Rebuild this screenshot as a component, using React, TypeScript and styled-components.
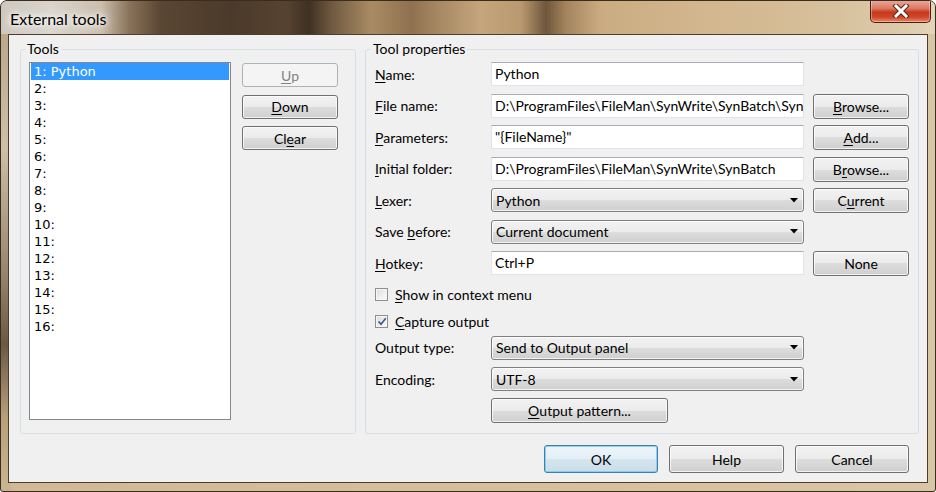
import React from "react";
import styled, { createGlobalStyle } from "styled-components";

const FONT = `"Lato", "Liberation Sans", Arial, sans-serif`;
const LIST_FONT = `"DejaVu Sans", Verdana, sans-serif`;

const GlobalStyle = createGlobalStyle`
  html, body { margin: 0; padding: 0; }
  body {
    width: 936px; height: 492px; overflow: hidden; background: #fff;
    font-family: ${FONT}; font-size: 14px; color: #000;
  }
  * { box-sizing: border-box; }
`;

const Window = styled.div`
  width: 936px;
  height: 492px;
  border: 1px solid #3a2c1f;
  border-radius: 7px 7px 3px 3px;
  overflow: hidden;
  display: flex;
  flex-direction: column;
  background:
    linear-gradient(90deg, transparent 0, transparent 10px, #d0b994 10px, #d9c6a4 100%),
    linear-gradient(180deg, #b6a285 0%, #cdbfa8 30%, #9a8670 55%, #6c5843 70%, #b79f7c 85%, #cbb591 100%);
`;

const TitleBar = styled.div`
  flex: none;
  height: 33px;
  display: flex;
  align-items: flex-start;
  justify-content: space-between;
  padding: 0 4px 0 9px;
  background: linear-gradient(
    90deg,
    #cdc8bf 0px,
    #dad5cd 50px,
    #cbbfae 100px,
    #8a735a 128px,
    #5a4633 160px,
    #4b3a2a 230px,
    #574330 285px,
    #3f3022 308px,
    #6e5840 330px,
    #a98b63 370px,
    #8f7150 410px,
    #a88a64 440px,
    #c5a57b 480px,
    #b9996f 520px,
    #6f563b 545px,
    #a3845c 565px,
    #cbac82 600px,
    #d2b68d 700px,
    #d6bf9a 820px,
    #ddcaa9 900px,
    #e4d5ba 934px
  );
`;

const Title = styled.span`
  margin-top: 8px;
  font-size: 16px;
  line-height: 20px;
  color: #000;
  text-shadow: 0 0 5px #fff, 0 0 9px #fff, 0 0 14px rgba(255, 255, 255, 0.9);
`;

const CloseButton = styled.div`
  width: 61px;
  height: 23px;
  margin-top: -1px;
  border: 1px solid #4a1d14;
  border-top: none;
  border-radius: 0 0 5px 5px;
  background: linear-gradient(180deg, #e9ab9b 0%, #dc7a63 38%, #c53a1d 55%, #d14629 78%, #e98a6d 100%);
  box-shadow: inset 0 0 0 1px rgba(255, 255, 255, 0.35);
  display: flex;
  align-items: center;
  justify-content: center;
`;

const Body = styled.div`
  flex: 1;
  display: flex;
  padding: 0 7px 8px;
`;

const Client = styled.div`
  flex: 1;
  border: 1px solid #4d3d2d;
  background: #f0f0f0;
  display: flex;
  flex-direction: column;
  gap: 11px;
  padding: 5px 8px 9px 11px;
`;

const GroupsRow = styled.div`
  flex: none;
  height: 394px;
  display: flex;
  gap: 9px;
`;

const Group = styled.fieldset<{ $w: number; $pad: string }>`
  width: ${(p) => p.$w}px;
  height: 394px;
  margin: 0;
  min-width: 0;
  border: 1px solid #d5dfe5;
  border-radius: 3px;
  padding: ${(p) => p.$pad};
`;

const Legend = styled.legend`
  font-size: 14px;
  line-height: 18px;
  padding: 0 2px;
  margin-left: -4px;
`;

const ToolsBody = styled.div`
  display: flex;
  gap: 11px;
  align-items: flex-start;
`;

const ListBox = styled.div`
  width: 202px;
  height: 358px;
  border: 1px solid #828790;
  background: #fff;
  padding: 0 1px;
  font-family: ${LIST_FONT};
  font-size: 13px;
`;

const ListItem = styled.div<{ $selected?: boolean }>`
  height: 17px;
  line-height: 18px;
  padding-left: 3px;
  background: ${(p) => (p.$selected ? "#3399ff" : "transparent")};
  color: ${(p) => (p.$selected ? "#fff" : "#000")};
  white-space: nowrap;
`;

const ButtonColumn = styled.div`
  display: flex;
  flex-direction: column;
  gap: 7.5px;
  margin-top: 1px;
`;

const Button = styled.button<{ $w: number; $h?: number; $primary?: boolean }>`
  width: ${(p) => p.$w}px;
  height: ${(p) => p.$h ?? 25}px;
  padding: 0;
  margin: 0;
  font-family: ${FONT};
  font-size: 14px;
  color: #000;
  border: 1px solid ${(p) => (p.$primary ? "#3c7fb1" : "#707070")};
  border-radius: 3px;
  background: ${(p) =>
    p.$primary
      ? "linear-gradient(180deg, #eef5fa 0%, #e3eef5 50%, #d4e5ef 50%, #c9dde9 100%)"
      : "linear-gradient(180deg, #f2f2f2 0%, #ebebeb 50%, #dddddd 50%, #cfcfcf 100%)"};
  box-shadow: inset 0 0 0 1px ${(p) => (p.$primary ? "rgba(120,200,240,0.8)" : "rgba(255,255,255,0.75)")};
  display: flex;
  align-items: center;
  justify-content: center;
  align-self: start;

  &:disabled {
    border-color: #adb2b5;
    background: #f4f4f4;
    color: #838383;
    box-shadow: none;
  }
`;

const PropGrid = styled.div`
  display: grid;
  grid-template-columns: 107px 313px 96px;
  grid-template-rows: repeat(8, 24px) 14px 24px 24px 24px;
  column-gap: 9px;
  row-gap: 7.5px;
  align-items: center;
`;

const FieldLabel = styled.span`
  font-size: 14px;
  white-space: nowrap;
`;

const Key = styled.span`
  text-decoration: underline;
  text-underline-offset: 2px;
  text-decoration-thickness: 1px;
`;

const TextBox = styled.div`
  height: 24px;
  background: #fff;
  border: 1px solid #e2e3ea;
  border-top-color: #abadb3;
  padding: 0 3px;
  line-height: 22px;
  white-space: nowrap;
  overflow: hidden;
`;

const Select = styled.div`
  height: 24px;
  border: 1px solid #7f7f7f;
  border-radius: 3px;
  background: linear-gradient(180deg, #f2f2f2 0%, #ebebeb 50%, #dddddd 50%, #cfcfcf 100%);
  box-shadow: inset 0 0 0 1px rgba(255, 255, 255, 0.75);
  display: flex;
  align-items: center;
  justify-content: space-between;
  padding: 0 5px 0 4px;
  white-space: nowrap;
`;

const CheckRow = styled.div`
  grid-column: 1 / -1;
  display: flex;
  align-items: center;
  gap: 7px;
`;

const CheckBox = styled.span`
  flex: none;
  width: 13px;
  height: 13px;
  border: 1px solid #8e8f8f;
  background: linear-gradient(135deg, #d9dadb 0%, #f0f0f0 60%, #fbfbfb 100%);
  box-shadow: inset 0 0 0 1px #f6f6f6;
  display: flex;
  align-items: center;
  justify-content: center;
`;

const PatternCell = styled.div`
  grid-column: 2;
  display: flex;
`;

const BottomRow = styled.div`
  flex: none;
  height: 28px;
  display: flex;
  justify-content: flex-end;
  gap: 11px;
  padding-right: 10px;
`;

const Arrow = () => (
  <svg width="8" height="5" viewBox="0 0 8 5">
    <path d="M0 0 H8 L4 4.5 Z" fill="#000" />
  </svg>
);

const Tick = () => (
  <svg width="10" height="9" viewBox="0 0 10 9">
    <path d="M1.5 4.5 L4 7.2 L8.8 1.2" fill="none" stroke="#3b5b8f" strokeWidth="1.7" />
  </svg>
);

const CloseGlyph = () => (
  <svg width="18" height="14" viewBox="0 0 18 14">
    <path d="M4 2 L14 12 M14 2 L4 12" stroke="#5a2418" strokeWidth="5" strokeLinecap="square" />
    <path d="M4 2 L14 12 M14 2 L4 12" stroke="#fff" strokeWidth="3" strokeLinecap="square" />
  </svg>
);

const items = Array.from({ length: 16 }, (_, i) => (i === 0 ? "1: Python" : `${i + 1}:`));

export default function App() {
  return (
    <>
      <GlobalStyle />
      <Window>
        <TitleBar>
          <Title>External tools</Title>
          <CloseButton>
            <CloseGlyph />
          </CloseButton>
        </TitleBar>
        <Body>
          <Client>
            <GroupsRow>
              <Group $w={336} $pad="4px 17px 13px 8px">
                <Legend>Tools</Legend>
                <ToolsBody>
                  <ListBox>
                    {items.map((t, i) => (
                      <ListItem key={t} $selected={i === 0}>
                        {t}
                      </ListItem>
                    ))}
                  </ListBox>
                  <ButtonColumn>
                    <Button $w={96} $h={24} disabled>
                      <Key>U</Key>p
                    </Button>
                    <Button $w={96} $h={24}>
                      <Key>D</Key>own
                    </Button>
                    <Button $w={96} $h={24}>
                      Cl<Key>e</Key>ar
                    </Button>
                  </ButtonColumn>
                </ToolsBody>
              </Group>
              <Group $w={554} $pad="4px 8px 10px 9px">
                <Legend>Tool properties</Legend>
                <PropGrid>
                  <FieldLabel>
                    <Key>N</Key>ame:
                  </FieldLabel>
                  <TextBox>Python</TextBox>
                  <span />

                  <FieldLabel>
                    <Key>F</Key>ile name:
                  </FieldLabel>
                  <TextBox>D:\ProgramFiles\FileMan\SynWrite\SynBatch\SynP</TextBox>
                  <Button $w={96}>
                    <Key>B</Key>rowse...
                  </Button>

                  <FieldLabel>
                    <Key>P</Key>arameters:
                  </FieldLabel>
                  <TextBox>"{"{FileName}"}"</TextBox>
                  <Button $w={96}>
                    <Key>A</Key>dd...
                  </Button>

                  <FieldLabel>
                    <Key>I</Key>nitial folder:
                  </FieldLabel>
                  <TextBox>D:\ProgramFiles\FileMan\SynWrite\SynBatch</TextBox>
                  <Button $w={96}>
                    B<Key>r</Key>owse...
                  </Button>

                  <FieldLabel>
                    <Key>L</Key>exer:
                  </FieldLabel>
                  <Select>
                    <span>Python</span>
                    <Arrow />
                  </Select>
                  <Button $w={96}>
                    C<Key>u</Key>rrent
                  </Button>

                  <FieldLabel>
                    Save <Key>b</Key>efore:
                  </FieldLabel>
                  <Select>
                    <span>Current document</span>
                    <Arrow />
                  </Select>
                  <span />

                  <FieldLabel>
                    <Key>H</Key>otkey:
                  </FieldLabel>
                  <TextBox>Ctrl+P</TextBox>
                  <Button $w={96}>None</Button>

                  <CheckRow>
                    <CheckBox />
                    <FieldLabel>
                      <Key>S</Key>how in context menu
                    </FieldLabel>
                  </CheckRow>

                  <CheckRow>
                    <CheckBox>
                      <Tick />
                    </CheckBox>
                    <FieldLabel>
                      <Key>C</Key>apture output
                    </FieldLabel>
                  </CheckRow>

                  <FieldLabel>Output type:</FieldLabel>
                  <Select>
                    <span>Send to Output panel</span>
                    <Arrow />
                  </Select>
                  <span />

                  <FieldLabel>Encoding:</FieldLabel>
                  <Select>
                    <span>UTF-8</span>
                    <Arrow />
                  </Select>
                  <span />

                  <PatternCell>
                    <Button $w={177}>
                      <Key>O</Key>utput pattern...
                    </Button>
                  </PatternCell>
                </PropGrid>
              </Group>
            </GroupsRow>
            <BottomRow>
              <Button $w={114} $h={28} $primary>
                OK
              </Button>
              <Button $w={115} $h={28}>
                Help
              </Button>
              <Button $w={114} $h={28}>
                Cancel
              </Button>
            </BottomRow>
          </Client>
        </Body>
      </Window>
    </>
  );
}
